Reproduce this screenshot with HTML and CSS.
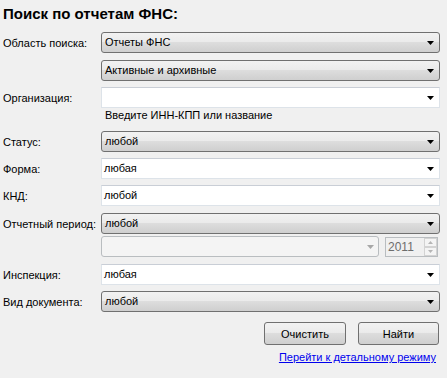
FILE: index.html
```html
<!DOCTYPE html>
<html lang="ru">
<head>
<meta charset="utf-8">
<title>Поиск по отчетам ФНС</title>
<link rel="stylesheet" href="styles.css">
</head>
<body>
<div class="panel">
  <h1 class="title">Поиск по отчетам ФНС:</h1>

  <div class="row r-first">
    <span class="label">Область поиска:</span>
    <div class="combo"><span class="val">Отчеты ФНС</span><svg class="arrow" width="7" height="4" viewBox="0 0 7 4"><polygon points="0,0 7,0 3.5,4" fill="#000"/></svg></div>
  </div>
  <div class="row m7">
    <span class="label"></span>
    <div class="combo"><span class="val">Активные и архивные</span><svg class="arrow" width="7" height="4" viewBox="0 0 7 4"><polygon points="0,0 7,0 3.5,4" fill="#000"/></svg></div>
  </div>
  <div class="row m6">
    <span class="label">Организация:</span>
    <div class="edit"><span class="val"></span><svg class="arrow" width="7" height="4" viewBox="0 0 7 4"><polygon points="0,0 7,0 3.5,4" fill="#000"/></svg></div>
  </div>
  <div class="hint">Введите ИНН-КПП или название</div>

  <div class="row m9">
    <span class="label">Статус:</span>
    <div class="combo"><span class="val">любой</span><svg class="arrow" width="7" height="4" viewBox="0 0 7 4"><polygon points="0,0 7,0 3.5,4" fill="#000"/></svg></div>
  </div>
  <div class="row m6">
    <span class="label">Форма:</span>
    <div class="edit"><span class="val">любая</span><svg class="arrow" width="7" height="4" viewBox="0 0 7 4"><polygon points="0,0 7,0 3.5,4" fill="#000"/></svg></div>
  </div>
  <div class="row m6">
    <span class="label">КНД:</span>
    <div class="edit"><span class="val">любой</span><svg class="arrow" width="7" height="4" viewBox="0 0 7 4"><polygon points="0,0 7,0 3.5,4" fill="#000"/></svg></div>
  </div>
  <div class="row m7">
    <span class="label">Отчетный период:</span>
    <div class="combo"><span class="val">любой</span><svg class="arrow" width="7" height="4" viewBox="0 0 7 4"><polygon points="0,0 7,0 3.5,4" fill="#000"/></svg></div>
  </div>
  <div class="row m2">
    <span class="label"></span>
    <div class="period">
      <div class="combo-disabled"><span class="val"></span><svg class="arrow" width="7" height="4" viewBox="0 0 7 4"><polygon points="0,0 7,0 3.5,4" fill="#a7a7a7"/></svg></div>
      <div class="spin">
        <span class="spin-val">2011</span>
        <div class="spin-btns">
          <div class="spin-btn"><svg width="5" height="3" viewBox="0 0 5 3"><polygon points="0,3 5,3 2.5,0" fill="#b5b5b5"/></svg></div>
          <div class="spin-btn"><svg width="5" height="3" viewBox="0 0 5 3"><polygon points="0,0 5,0 2.5,3" fill="#b5b5b5"/></svg></div>
        </div>
      </div>
    </div>
  </div>
  <div class="row m7">
    <span class="label">Инспекция:</span>
    <div class="edit"><span class="val">любая</span><svg class="arrow" width="7" height="4" viewBox="0 0 7 4"><polygon points="0,0 7,0 3.5,4" fill="#000"/></svg></div>
  </div>
  <div class="row m6">
    <span class="label">Вид документа:</span>
    <div class="combo"><span class="val">любой</span><svg class="arrow" width="7" height="4" viewBox="0 0 7 4"><polygon points="0,0 7,0 3.5,4" fill="#000"/></svg></div>
  </div>

  <div class="buttons">
    <button class="btn btn-clear" type="button">Очистить</button>
    <button class="btn btn-find" type="button">Найти</button>
  </div>
  <div class="link-row">
    <a class="link" href="#">Перейти к детальному режиму</a>
  </div>
</div>
</body>
</html>
```

FILE: styles.css
```css
html, body {
  margin: 0;
  padding: 0;
  background: #f0f0f0;
}
body {
  font-family: "Liberation Sans", Arial, sans-serif;
  font-size: 11px;
  color: #000;
  width: 447px;
  height: 378px;
  overflow: hidden;
}
.panel {
  padding: 0 0 0 3px;
  display: flex;
  flex-direction: column;
}
.title {
  margin: 5px 0 0 0;
  font-size: 15px;
  line-height: 17px;
  height: 17px;
  font-weight: bold;
}
.row {
  display: flex;
  align-items: center;
  height: 21px;
}
.r-first { margin-top: 10px; }
.m2 { margin-top: 2px; }
.m6 { margin-top: 6px; }
.m7 { margin-top: 7px; }
.m9 { margin-top: 9px; }
.label {
  width: 98px;
  flex: none;
  white-space: nowrap;
}
.combo, .edit, .combo-disabled {
  box-sizing: border-box;
  height: 21px;
  width: 339px;
  display: flex;
  align-items: center;
  justify-content: space-between;
  padding: 0 5px 0 3px;
}
.combo {
  border: 1px solid #707070;
  border-radius: 3px;
  background: linear-gradient(to bottom, #f2f2f2 0%, #ebebeb 45%, #dddddd 50%, #cfcfcf 100%);
}
.edit {
  border: 1px solid #dde3e9;
  border-top-color: #c9ced6;
  background: #fff;
  padding-left: 2px;
}
.combo-disabled {
  width: 278px;
  border: 1px solid #b9bdc0;
  border-radius: 3px;
  background: #f4f4f4;
  padding-right: 4px;
}
.val {
  line-height: 13px;
}
.arrow { flex: none; }
.period {
  display: flex;
  align-items: center;
  gap: 6px;
}
.spin {
  box-sizing: border-box;
  width: 53px;
  height: 20px;
  border: 1px solid #b9bdc0;
  background: #f0f0f0;
  display: flex;
  align-items: center;
  justify-content: space-between;
  padding: 0 0 0 2px;
}
.spin-val {
  color: #6d6d6d;
  font-size: 12px;
}
.spin-btns {
  display: flex;
  flex-direction: column;
  height: 18px;
  width: 13px;
}
.spin-btn {
  flex: 1;
  box-sizing: border-box;
  border: 1px solid #d3d3d3;
  background: #f4f4f4;
  display: flex;
  align-items: center;
  justify-content: center;
}
.hint {
  margin: 1px 0 0 101px;
  line-height: 13px;
  height: 13px;
  padding-left: 1px;
}
.buttons {
  display: flex;
  gap: 12px;
  margin: 10px 0 0 261px;
}
.btn {
  box-sizing: border-box;
  height: 23px;
  border: 1px solid #707070;
  border-radius: 3px;
  background: linear-gradient(to bottom, #f2f2f2 0%, #ebebeb 45%, #dddddd 50%, #cfcfcf 100%);
  font-family: "Liberation Sans", Arial, sans-serif;
  font-size: 11px;
  color: #000;
  padding: 0;
}
.btn-clear { width: 82px; }
.btn-find { width: 81px; }
.link-row {
  margin-top: 6px;
  display: flex;
  justify-content: flex-end;
  width: 433px;
  line-height: 13px;
}
.link {
  color: #0000ee;
  text-decoration: underline;
}
```
